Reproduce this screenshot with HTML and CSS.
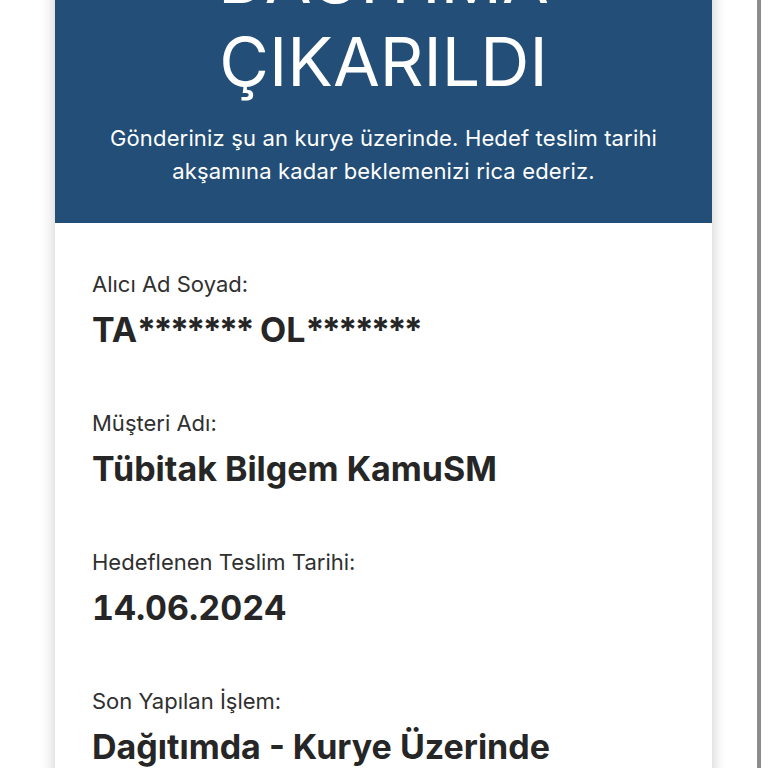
FILE: index.html
```html
<!DOCTYPE html>
<html lang="tr">
<head>
<meta charset="utf-8">
<link rel="stylesheet" href="styles.css">
</head>
<body>
<div class="page">
  <div class="card">
    <div class="hero">
      <h1 class="hero-title">DAĞITIMA<br>ÇIKARILDI</h1>
      <p class="hero-text">Gönderiniz şu an kurye üzerinde. Hedef teslim tarihi<br>akşamına kadar beklemenizi rica ederiz.</p>
    </div>
    <div class="details">
      <div class="item">
        <div class="label">Alıcı Ad Soyad:</div>
        <div class="value">TA<span class="mask">*******</span> OL<span class="mask">*******</span></div>
      </div>
      <div class="item">
        <div class="label">Müşteri Adı:</div>
        <div class="value">Tübitak Bilgem KamuSM</div>
      </div>
      <div class="item">
        <div class="label">Hedeflenen Teslim Tarihi:</div>
        <div class="value value-num">14.06.2024</div>
      </div>
      <div class="item">
        <div class="label">Son Yapılan İşlem:</div>
        <div class="value">Dağıtımda - Kurye Üzerinde</div>
      </div>
    </div>
  </div>
  <div class="edge"></div>
</div>
</body>
</html>
```
FILE: styles.css
```css
html, body {
  margin: 0;
  padding: 0;
  background: #ffffff;
  overflow: hidden;
}
body {
  font-family: Inter, "Noto Sans", sans-serif;
  height: 768px;
}
.page {
  display: flex;
  align-items: stretch;
  padding-left: 55px;
  height: 768px;
}
.card {
  width: 657px;
  flex: none;
  margin-top: -103px;
  background: #ffffff;
  box-shadow: 0 0 14px rgba(0, 0, 0, 0.22);
  height: 1000px;
}
.edge {
  width: 4px;
  margin-left: 45px;
  background: #8c8c8c;
  flex: none;
}
.hero {
  background: #224e77;
  color: #ffffff;
  text-align: center;
  padding: 40px 20px 35px;
}
.hero-title {
  margin: 0;
  font-weight: 400;
  font-size: 68px;
  line-height: 83px;
  letter-spacing: 0;
}
.hero-text {
  margin: 19px 0 0;
  font-size: 22px;
  line-height: 33px;
  letter-spacing: 0.15px;
}
.details {
  padding: 47px 37px 0;
  display: flex;
  flex-direction: column;
  gap: 59px;
}
.label {
  font-size: 22px;
  line-height: 28px;
  color: #303030;
  margin-bottom: 12px;
}
.value {
  font-size: 34px;
  line-height: 40px;
  font-weight: 700;
  color: #262626;
  letter-spacing: 0;
}
.mask {
  letter-spacing: -2.6px;
}
.value-num {
  font-feature-settings: "tnum";
}
```
